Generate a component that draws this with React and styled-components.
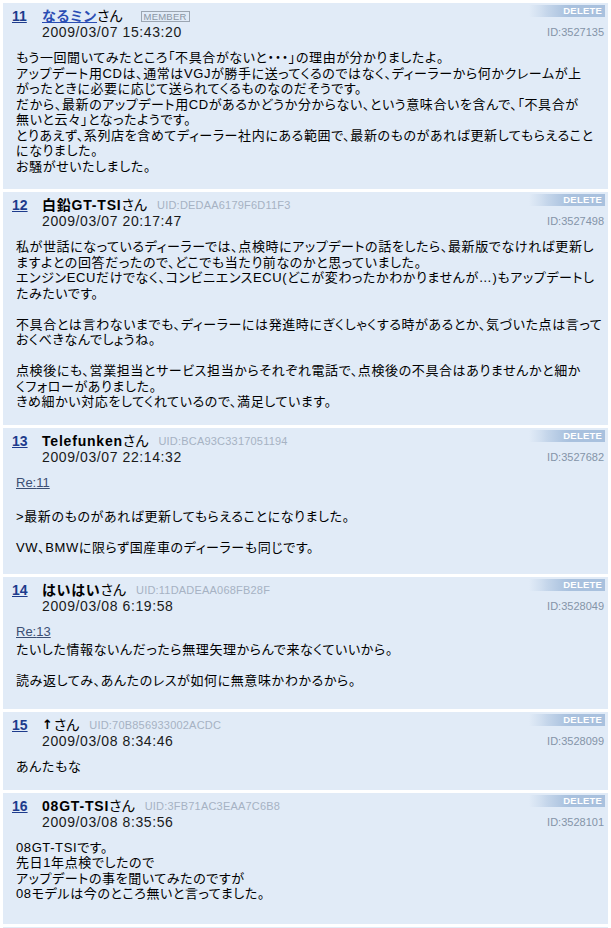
import React from "react";
import styled, { createGlobalStyle } from "styled-components";

const GlobalStyle = createGlobalStyle`
  html, body {
    margin: 0;
    padding: 0;
    background: #ffffff;
  }
  body {
    font-family: "Liberation Sans", "Noto Sans CJK JP", sans-serif;
    font-feature-settings: "palt";
    color: #000;
  }
`;

const Board = styled.div`
  display: flex;
  flex-direction: column;
  gap: 3px;
  padding: 3px;
`;

const Card = styled.div`
  background: #e1ebf7;
  padding: 2px 3px ${({ $tail }) => 15 + ($tail || 0)}px 0;
`;

// the next post, only its top edge shows at the bottom of the window
const NextCard = styled.div`
  background: #e1ebf7;
  height: 40px;
`;

const HeadRow = styled.div`
  display: flex;
  justify-content: space-between;
  align-items: flex-start;
  height: 19px;
`;

const Who = styled.div`
  display: flex;
  align-items: center;
  margin-top: 3px;
  height: 16px;
  line-height: 16px;
  padding-left: 9px;
  white-space: nowrap;
`;

const No = styled.a`
  width: 30px;
  font-size: 14px;
  font-weight: bold;
  color: #1d3b8c;
  text-decoration: underline;
`;

const Name = styled.span`
  font-family: ${({ $sym }) =>
    $sym ? '"DejaVu Sans", sans-serif' : "inherit"};
  font-size: ${({ $sym }) => ($sym ? 13 : 14)}px;
  line-height: 16px;
  font-weight: bold;
  letter-spacing: 0.8px;
  color: ${({ $link }) => ($link ? "#2a4db4" : "#000")};
  text-decoration: ${({ $link }) => ($link ? "underline" : "none")};
`;

const San = styled.span`
  font-size: 14px;
  line-height: 16px;
`;

const Member = styled.span`
  margin-left: 18px;
  border: 1px solid #9ba5b1;
  color: #8a96a4;
  font-size: 9.5px;
  line-height: 9px;
  padding: 0 2px;
  letter-spacing: 0.2px;
`;

const Uid = styled.span`
  margin-left: 10px;
  font-size: 11px;
  color: #a6b2c3;
  letter-spacing: 0.2px;
`;

const DeleteBar = styled.div`
  width: 76px;
  height: 12px;
  box-sizing: border-box;
  padding-right: 3px;
  text-align: right;
  font-size: 9.5px;
  font-weight: bold;
  line-height: 12px;
  color: #fff;
  letter-spacing: 0.2px;
  background: linear-gradient(
    to right,
    rgba(169, 193, 222, 0) 0px,
    rgba(169, 193, 222, 0.15) 6px,
    rgba(169, 193, 222, 0.3) 12px,
    rgba(169, 193, 222, 0.5) 18px,
    rgba(169, 193, 222, 0.7) 26px,
    rgba(169, 193, 222, 0.9) 34px,
    #a9c1de 40px
  );
`;

const DateRow = styled.div`
  display: flex;
  justify-content: space-between;
  align-items: center;
  height: 16px;
  padding-left: 39px;
`;

const Stamp = styled.span`
  font-size: 14px;
  letter-spacing: 0.6px;
  color: #1a1a1a;
`;

const PostId = styled.span`
  font-size: 11px;
  color: #8494a8;
  padding-right: 1px;
`;

const Body = styled.div`
  margin-top: 10px;
  padding-left: 13px;
  font-size: 13px;
  line-height: 15.5px;
  letter-spacing: 0.6px;
`;

const Line = styled.div`
  white-space: nowrap;
  min-height: 15.5px;
`;

const Re = styled.a`
  display: block;
  color: #3c4f74;
  text-decoration: underline;
  letter-spacing: 0;
  line-height: 15.5px;
  margin-bottom: ${({ $gap }) => $gap || 0}px;
`;

const posts = [
  {
    no: 11,
    name: "なるミン",
    link: true,
    member: true,
    date: "2009/03/07 15:43:20",
    id: "3527135",
    lines: [
      "もう一回聞いてみたところ「不具合がないと・・・」の理由が分かりましたよ。",
      "アップデート用CDは、通常はVGJが勝手に送ってくるのではなく、ディーラーから何かクレームが上",
      "がったときに必要に応じて送られてくるものなのだそうです。",
      "だから、最新のアップデート用CDがあるかどうか分からない、という意味合いを含んで、「不具合が",
      "無いと云々」となったようです。",
      "とりあえず、系列店を含めてディーラー社内にある範囲で、最新のものがあれば更新してもらえること",
      "になりました。",
      "お騒がせいたしました。",
    ],
  },
  {
    no: 12,
    name: "白鉛GT-TSI",
    uid: "DEDAA6179F6D11F3",
    date: "2009/03/07 20:17:47",
    id: "3527498",
    lines: [
      "私が世話になっているディーラーでは、点検時にアップデートの話をしたら、最新版でなければ更新し",
      "ますよとの回答だったので、どこでも当たり前なのかと思っていました。",
      "エンジンECUだけでなく、コンビニエンスECU(どこが変わったかわかりませんが…)もアップデートし",
      "たみたいです。",
      "",
      "不具合とは言わないまでも、ディーラーには発進時にぎくしゃくする時があるとか、気づいた点は言って",
      "おくべきなんでしょうね。",
      "",
      "点検後にも、営業担当とサービス担当からそれぞれ電話で、点検後の不具合はありませんかと細か",
      "くフォローがありました。",
      "きめ細かい対応をしてくれているので、満足しています。",
    ],
  },
  {
    no: 13,
    name: "Telefunken",
    uid: "BCA93C3317051194",
    date: "2009/03/07 22:14:32",
    id: "3527682",
    re: 11,
    reGap: 3,
    tail: 4,
    lines: [
      "",
      ">最新のものがあれば更新してもらえることになりました。",
      "",
      "VW、BMWに限らず国産車のディーラーも同じです。",
    ],
  },
  {
    no: 14,
    name: "はいはい",
    uid: "11DADEAA068FB28F",
    date: "2009/03/08 6:19:58",
    id: "3528049",
    re: 13,
    reGap: 2,
    tail: 6,
    lines: [
      "たいした情報ないんだったら無理矢理からんで来なくていいから。",
      "",
      "読み返してみ、あんたのレスが如何に無意味かわかるから。",
    ],
  },
  {
    no: 15,
    name: "↑",
    sym: true,
    uid: "70B856933002ACDC",
    date: "2009/03/08 8:34:46",
    id: "3528099",
    lines: ["あんたもな"],
  },
  {
    no: 16,
    name: "08GT-TSI",
    uid: "3FB71AC3EAA7C6B8",
    date: "2009/03/08 8:35:56",
    id: "3528101",
    tail: 7,
    lines: [
      "08GT-TSIです。",
      "先日1年点検でしたので",
      "アップデートの事を聞いてみたのですが",
      "08モデルは今のところ無いと言ってました。",
    ],
  },
];

function Post({ p }) {
  return (
    <Card $tail={p.tail}>
      <HeadRow>
        <Who>
          <No href="#">{p.no}</No>
          <Name $link={p.link} $sym={p.sym}>
            {p.name}
          </Name>
          <San>さん</San>
          {p.member && <Member>MEMBER</Member>}
          {p.uid && <Uid>UID:{p.uid}</Uid>}
        </Who>
        <DeleteBar>DELETE</DeleteBar>
      </HeadRow>
      <DateRow>
        <Stamp>{p.date}</Stamp>
        <PostId>ID:{p.id}</PostId>
      </DateRow>
      <Body>
        {p.re && (
          <Re href="#" $gap={p.reGap}>
            Re:{p.re}
          </Re>
        )}
        {p.lines.map((l, i) => (
          <Line key={i}>{l}</Line>
        ))}
      </Body>
    </Card>
  );
}

export default function App() {
  return (
    <>
      <GlobalStyle />
      <Board>
        {posts.map((p) => (
          <Post key={p.no} p={p} />
        ))}
        <NextCard />
      </Board>
    </>
  );
}
